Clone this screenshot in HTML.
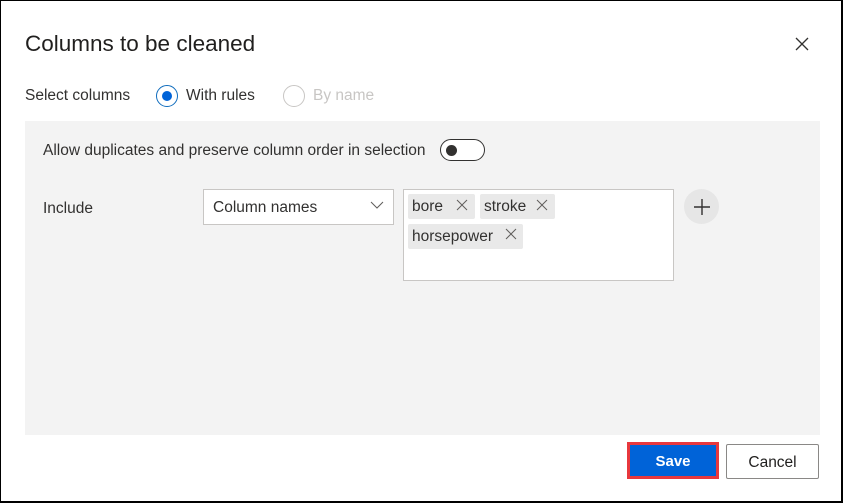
<!DOCTYPE html>
<html><head><style>
*{box-sizing:border-box;margin:0;padding:0}
body{width:843px;height:503px;background:#fff;font-family:"Liberation Sans",sans-serif;color:#323130;position:relative;overflow:hidden}
.frame{position:absolute;left:0;top:0;width:843px;height:503px;border:1px solid #000;border-right-width:2px;border-bottom-width:2px}
.abs{position:absolute}
.t{font-size:15.5px;white-space:nowrap;line-height:18px}
</style></head><body>
<div class="frame"></div>
<div class="abs" style="left:25px;top:31px;font-size:22.5px;color:#201f1e;white-space:nowrap">Columns to be cleaned</div>
<svg class="abs" style="left:795px;top:37px" width="14" height="14"><path d="M1 1L13 13M13 1L1 13" stroke="#323130" stroke-width="1.3"/></svg>
<div class="abs t" style="left:25px;top:87px">Select columns</div>
<div class="abs" style="left:156px;top:85px;width:22px;height:22px;border:1px solid #0f6cbd;border-radius:50%"><div style="position:absolute;left:5px;top:5px;width:10px;height:10px;border-radius:50%;background:#0063d8"></div></div>
<div class="abs t" style="left:186px;top:87px">With rules</div>
<div class="abs" style="left:283px;top:85px;width:22px;height:22px;border:1px solid #c8c6c4;border-radius:50%"></div>
<div class="abs t" style="left:313px;top:87px;color:#c8c6c4">By name</div>
<div class="abs" style="left:25px;top:121px;width:795px;height:314px;background:#f3f3f3"></div>
<div class="abs t" style="left:43px;top:142px">Allow duplicates and preserve column order in selection</div>
<div class="abs" style="left:440px;top:139px;width:45px;height:22px;border:1px solid #323130;border-radius:11px;background:#fff"><div style="position:absolute;left:5px;top:5px;width:11px;height:11px;border-radius:50%;background:#323130"></div></div>
<div class="abs t" style="left:43px;top:200px">Include</div>
<div class="abs" style="left:203px;top:189px;width:191px;height:36px;border:1px solid #c8c6c4;background:#fff"></div>
<div class="abs t" style="left:213px;top:199px">Column names</div>
<svg class="abs" style="left:370px;top:201px" width="14" height="9"><path d="M1 1L7 7L13 1" stroke="#605e5c" fill="none"/></svg>
<div class="abs" style="left:403px;top:189px;width:271px;height:92px;border:1px solid #c8c6c4;background:#fff"></div>
<div class="abs" style="left:408px;top:194px;width:67px;height:25px;background:#e9e9e9;border-radius:2px"></div>
<div class="abs t" style="left:412px;top:198px">bore</div>
<svg class="abs" style="left:456px;top:199px" width="12" height="12"><path d="M1 1L11 11M11 1L1 11" stroke="#605e5c"/></svg>
<div class="abs" style="left:480px;top:194px;width:75px;height:25px;background:#e9e9e9;border-radius:2px"></div>
<div class="abs t" style="left:484px;top:198px">stroke</div>
<svg class="abs" style="left:536px;top:199px" width="12" height="12"><path d="M1 1L11 11M11 1L1 11" stroke="#605e5c"/></svg>
<div class="abs" style="left:408px;top:224px;width:115px;height:25px;background:#e9e9e9;border-radius:2px"></div>
<div class="abs t" style="left:412px;top:228px">horsepower</div>
<svg class="abs" style="left:505px;top:228px" width="12" height="12"><path d="M1 1L11 11M11 1L1 11" stroke="#605e5c"/></svg>
<div class="abs" style="left:684px;top:189px;width:35px;height:35px;border-radius:50%;background:#e6e6e6"></div>
<svg class="abs" style="left:693px;top:198px" width="18" height="18"><path d="M9 1V17M1 9H17" stroke="#323130" stroke-width="1.4"/></svg>
<div class="abs" style="left:627px;top:442px;width:92px;height:37px;border:3px solid #e8383d;background:#0063d8;color:#fff;font-weight:bold;font-size:15px;text-align:center;line-height:33px">Save</div>
<div class="abs" style="left:726px;top:444px;width:93px;height:35px;border:1px solid #8a8886;border-radius:2px;background:#fff;font-size:15.5px;text-align:center;line-height:35px;color:#201f1e">Cancel</div>
</body></html>
